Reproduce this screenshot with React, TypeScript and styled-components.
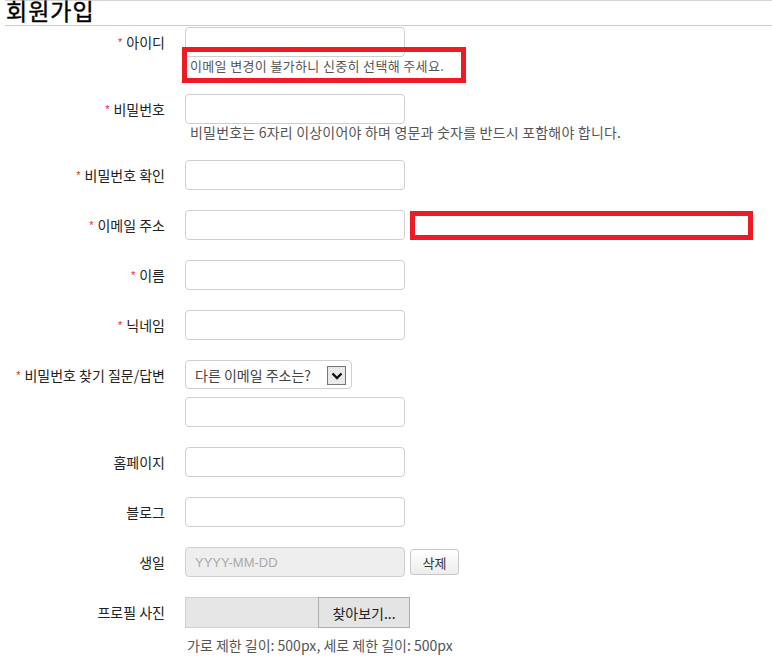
import React from "react";
import styled, { createGlobalStyle } from "styled-components";

const GlobalStyle = createGlobalStyle`
  html, body { margin: 0; padding: 0; background: #fff; }
  body {
    font-family: "Noto Sans CJK KR", "Noto Sans", "Liberation Sans", sans-serif;
    font-size: 13px;
    color: #333;
  }
  * { box-sizing: border-box; }
`;

const Page = styled.div`
  padding-left: 5px;
  width: 772px;
`;

const Header = styled.div`
  border-top: 1px solid #d4d4d4;
  border-bottom: 1px solid #cccccc;
  height: 26px;
`;

const Title = styled.h2`
  margin: 0;
  padding-left: 1px;
  height: 24px;
  line-height: 18px;
  font-size: 23px;
  font-weight: 400;
  color: #000;
  letter-spacing: 1px;
  -webkit-text-stroke: 0.4px #000;
`;

const Form = styled.form`
  padding-top: 1px;
  display: flex;
  flex-direction: column;
`;

const Row = styled.div`
  display: grid;
  grid-template-columns: 180px 1fr;
  align-items: start;
  margin-bottom: 20px;
`;

const Label = styled.label`
  height: 30px;
  display: flex;
  align-items: center;
  justify-content: flex-end;
  padding-right: 20px;
  font-size: 14px;
  color: #222;
  white-space: nowrap;
`;

const Star = styled.span`
  color: #e8262e;
  font-size: 11px;
  margin-right: 4px;
  font-family: "Liberation Sans", sans-serif;
`;

const Field = styled.div<{ $gap?: number }>`
  display: flex;
  flex-direction: column;
  gap: ${(p) => p.$gap ?? 0}px;
`;

const Line = styled.div`
  display: flex;
  align-items: center;
`;

const Input = styled.input<{ $disabled?: boolean }>`
  width: 220px;
  height: 30px;
  border: 1px solid #cfcfcf;
  border-radius: 4px;
  background: ${(p) => (p.$disabled ? "#eeeeee" : "#fff")};
  padding: 0 9px;
  font-family: "Liberation Sans", sans-serif;
  font-size: 13px;
  color: #333;
  outline: none;
  &::placeholder { color: #aaaaaa; }
`;

const HintWrap = styled.div`
  position: relative;
  align-self: flex-start;
`;

const Hint = styled.div<{ $pt: number; $pl: number; $size: number; $ls: number }>`
  margin-top: ${(p) => p.$pt}px;
  padding-left: ${(p) => p.$pl}px;
  line-height: 16px;
  font-size: ${(p) => p.$size}px;
  letter-spacing: ${(p) => p.$ls}px;
  color: #555;
  white-space: nowrap;
`;

const Mark = styled.span`
  position: absolute;
  left: -3px;
  top: -10px;
  width: 284px;
  height: 36px;
  border: 5px solid #ed1c24;
  pointer-events: none;
`;

const ErrorBox = styled.span`
  display: block;
  width: 343px;
  height: 29px;
  margin-left: 5px;
  border: 5px solid #ed1c24;
`;

const SelectBox = styled.div`
  width: 167px;
  height: 29px;
  border: 1px solid #cfcfcf;
  border-radius: 4px;
  display: flex;
  align-items: center;
  justify-content: space-between;
  padding: 0 5px 0 9px;
  font-size: 14px;
  color: #444;
`;

const Arrow = styled.span`
  width: 19px;
  height: 19px;
  border: 1px solid #777;
  background: #e9e9e9;
  display: flex;
  align-items: center;
  justify-content: center;
  margin-top: 2px;
`;

const SmallButton = styled.button`
  margin-left: 5px;
  width: 49px;
  height: 26px;
  border: 1px solid #c8c8c8;
  border-radius: 3px;
  background: linear-gradient(#ffffff, #ececec);
  font-family: "Noto Sans CJK KR", sans-serif;
  font-size: 13px;
  color: #333;
  padding: 0;
`;

const FileBox = styled.div`
  display: flex;
  height: 31px;
  width: 225px;
  border: 1px solid #d0d0d0;
  background: #e6e6e6;
`;

const FileName = styled.div`
  flex: 1;
`;

const FileButton = styled.button`
  width: 92px;
  height: 31px;
  margin: -1px -1px -1px 0;
  border: 1px solid #adadad;
  background: #e4e4e4;
  font-family: "Noto Sans CJK KR", sans-serif;
  font-size: 14px;
  color: #222;
  padding: 0;
`;

const Req = () => <Star>*</Star>;

export default function App() {
  return (
    <Page>
      <GlobalStyle />
      <Header>
        <Title>회원가입</Title>
      </Header>
      <Form onSubmit={(e) => e.preventDefault()}>
        <Row>
          <Label><Req />아이디</Label>
          <Field>
            <Input />
            <HintWrap>
              <Hint $pt={1} $pl={5} $size={13} $ls={0.35}>이메일 변경이 불가하니 신중히 선택해 주세요.</Hint>
              <Mark />
            </HintWrap>
          </Field>
        </Row>
        <Row>
          <Label><Req />비밀번호</Label>
          <Field>
            <Input type="password" />
            <Hint $pt={0} $pl={5} $size={14} $ls={0.2}>비밀번호는 6자리 이상이어야 하며 영문과 숫자를 반드시 포함해야 합니다.</Hint>
          </Field>
        </Row>
        <Row>
          <Label><Req />비밀번호 확인</Label>
          <Field>
            <Input type="password" />
          </Field>
        </Row>
        <Row>
          <Label><Req />이메일 주소</Label>
          <Line>
            <Input />
            <ErrorBox />
          </Line>
        </Row>
        <Row>
          <Label><Req />이름</Label>
          <Field>
            <Input />
          </Field>
        </Row>
        <Row>
          <Label><Req />닉네임</Label>
          <Field>
            <Input />
          </Field>
        </Row>
        <Row>
          <Label><Req />비밀번호 찾기 질문/답변</Label>
          <Field $gap={8}>
            <SelectBox>
              <span>다른 이메일 주소는?</span>
              <Arrow>
                <svg width="12" height="10" viewBox="0 0 12 10">
                  <path d="M1.5 2.5 L6 7 L10.5 2.5" fill="none" stroke="#111" strokeWidth="2.4" />
                </svg>
              </Arrow>
            </SelectBox>
            <Input />
          </Field>
        </Row>
        <Row>
          <Label>홈페이지</Label>
          <Field>
            <Input />
          </Field>
        </Row>
        <Row>
          <Label>블로그</Label>
          <Field>
            <Input />
          </Field>
        </Row>
        <Row>
          <Label>생일</Label>
          <Line>
            <Input $disabled placeholder="YYYY-MM-DD" readOnly />
            <SmallButton type="button">삭제</SmallButton>
          </Line>
        </Row>
        <Row>
          <Label>프로필 사진</Label>
          <Field>
            <FileBox>
              <FileName />
              <FileButton type="button">찾아보기...</FileButton>
            </FileBox>
            <Hint $pt={9} $pl={2} $size={14} $ls={0}>가로 제한 길이: 500px, 세로 제한 길이: 500px</Hint>
          </Field>
        </Row>
      </Form>
    </Page>
  );
}
